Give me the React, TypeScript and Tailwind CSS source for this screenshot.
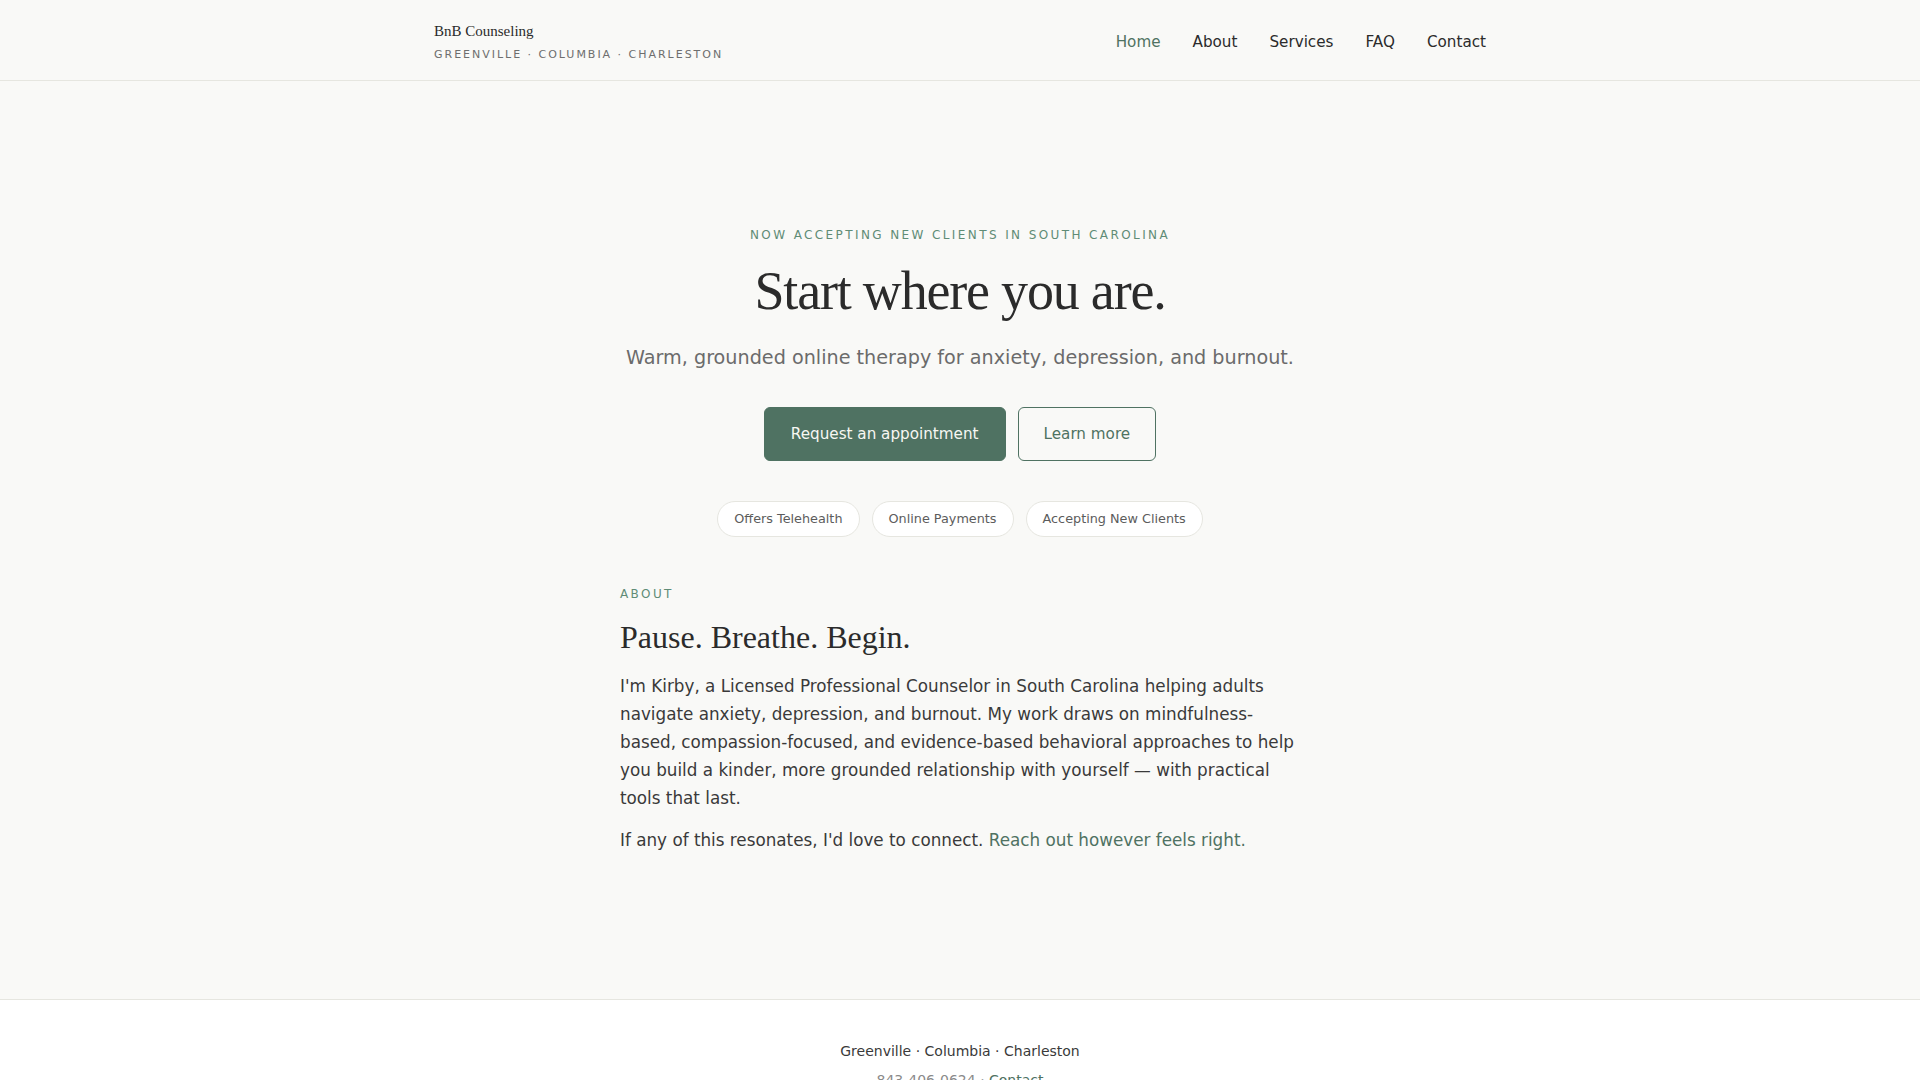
import React from "react";

const sans = "font-['DejaVu_Sans',sans-serif]";
const serif = "font-['Liberation_Serif','Times_New_Roman',serif]";

export default function App() {
  return (
    <div className={`min-h-screen bg-[#f9f9f7] text-[#2b2b2b] ${sans}`}>
      <header className="h-[81px] border-b border-[#e6e6e0] bg-[#f9f9f7]">
        <div className="mx-auto flex h-full max-w-[1100px] items-center justify-between px-6">
          <div className="flex flex-col pt-[4px]">
            <span className={`${serif} text-[15px] leading-5 text-[#2b2b2b]`}>BnB Counseling</span>
            <span className="mt-[6px] text-[11px] leading-4 tracking-[0.18em] text-[#6e6e6e]">
              GREENVILLE · COLUMBIA · CHARLESTON
            </span>
          </div>
          <nav className="flex items-center gap-8 pt-[4px] text-[15.2px] leading-6">
            <a className="text-[#4f7262]">Home</a>
            <a className="text-[#2b2b2b]">About</a>
            <a className="text-[#2b2b2b]">Services</a>
            <a className="text-[#2b2b2b]">FAQ</a>
            <a className="text-[#2b2b2b]">Contact</a>
          </nav>
        </div>
      </header>

      <main className="pb-[145px]">
        <section className="flex flex-col items-center pt-[146px] text-center">
          <p className="text-xs leading-4 tracking-[0.2em] text-[#5f8c76]">
            NOW ACCEPTING NEW CLIENTS IN SOUTH CAROLINA
          </p>
          <h1 className={`${serif} mt-[17px] text-[54px] leading-[62px] tracking-[-0.022em] text-[#2b2b2b]`}>
            Start where you are.
          </h1>
          <p className="mt-[22px] text-[19.2px] leading-7 text-[#6b6b6b]">
            Warm, grounded online therapy for anxiety, depression, and burnout.
          </p>
          <div className="mt-[35px] flex items-center gap-3">
            <a className="rounded-md border border-[#4f7262] bg-[#4f7262] px-[26px] py-[14px] text-[15.2px] leading-6 text-[#f7f7f2]">
              Request an appointment
            </a>
            <a className="rounded-md border border-[#4f7262] bg-transparent px-[25px] py-[14px] text-[15.2px] leading-6 text-[#4f7262]">
              Learn more
            </a>
          </div>
          <div className="mt-[40px] flex items-center gap-3">
            {["Offers Telehealth", "Online Payments", "Accepting New Clients"].map((t) => (
              <span
                key={t}
                className="rounded-full border border-[#e6e6e0] bg-white px-[16px] py-2 text-[12.8px] leading-[18px] text-[#5c5c5c]"
              >
                {t}
              </span>
            ))}
          </div>
        </section>

        <section className="mx-auto mt-[49px] max-w-[680px]">
          <p className="text-xs leading-4 tracking-[0.2em] text-[#5f8c76]">ABOUT</p>
          <h2 className={`${serif} mt-[15px] text-[32px] leading-10 text-[#2b2b2b]`}>
            Pause. Breathe. Begin.
          </h2>
          <p className="mt-[15px] text-[16.8px] leading-[28px] text-[#3a3a3a]">
            I'm Kirby, a Licensed Professional Counselor in South Carolina helping adults navigate anxiety,
            depression, and burnout. My work draws on mindfulness-based, compassion-focused, and evidence-based
            behavioral approaches to help you build a kinder, more grounded relationship with yourself — with
            practical tools that last.
          </p>
          <p className="mt-[14px] text-[16.8px] leading-[28px] text-[#3a3a3a]">
            If any of this resonates, I'd love to connect.{" "}
            <a className="text-[#4f7262]">Reach out however feels right.</a>
          </p>
        </section>
      </main>

      <footer className="border-t border-[#e6e6e0] bg-white pt-[41px] pb-10 text-center">
        <p className="text-sm leading-5 text-[#3a3a3a]">Greenville · Columbia · Charleston</p>
        <p className="mt-[9px] text-sm leading-5 text-[#8a8a8a]">
          843-406-0624 · <a className="text-[#4f7262]">Contact</a>
        </p>
      </footer>
    </div>
  );
}
